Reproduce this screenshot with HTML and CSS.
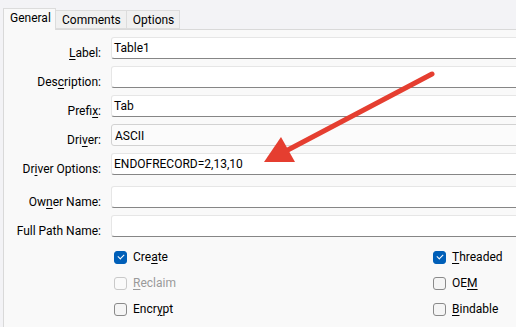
FILE: index.html
```html
<!DOCTYPE html>
<html>
	<head>
		<title>Table properties</title>
		<link rel="stylesheet" href="styles.css">
	</head>
	<body>
		<div class="window">
			<div class="tabs">
				<div class="tab active">General</div>
				<div class="tab">Comments</div>
				<div class="tab">Options</div>
			</div>
			<div class="panel">
				<div class="form">
					<div class="label"><u>L</u>abel:</div>
					<div class="field">Table1</div>
					<div class="label">Des<u>c</u>ription:</div>
					<div class="field"></div>
					<div class="label">Prefi<u>x</u>:</div>
					<div class="field">Tab</div>
					<div class="label">Dri<u>v</u>er:</div>
					<div class="field combo">ASCII</div>
					<div class="label">Dr<u>i</u>ver Options:</div>
					<div class="field">ENDOFRECORD=2,13,10</div>
					<div class="label spaced">Ow<u>n</u>er Name:</div>
					<div class="field spaced"></div>
					<div class="label">Full Path Name:</div>
					<div class="field"></div>
				</div>
				<div class="checks">
					<div class="check"><span class="box on"></span><span>Cre<u>a</u>te</span></div>
					<div class="check"><span class="box on"></span><span><u>T</u>hreaded</span></div>
					<div class="check disabled"><span class="box"></span><span><u>R</u>eclaim</span></div>
					<div class="check"><span class="box"></span><span>OE<u>M</u></span></div>
					<div class="check"><span class="box"></span><span>Encr<u>y</u>pt</span></div>
					<div class="check"><span class="box"></span><span><u>B</u>indable</span></div>
				</div>
			</div>
			<svg class="arrow" width="516" height="327" viewBox="0 0 516 327">
				<line x1="432" y1="74" x2="284" y2="152" stroke="#e53e30" stroke-width="5" stroke-linecap="round"/>
				<polygon points="264,162 281,137 295,162" fill="#e53e30"/>
			</svg>
		</div>
	</body>
</html>
```
FILE: styles.css
```css
html, body
{
	margin:0;
	padding:0;
}
body
{
	font-family:Roboto, "Noto Sans", sans-serif;
	font-size:12px;
	color:#000;
	background-color:#f3f3f6;
	overflow:hidden;
}
u
{
	text-decoration-thickness:1px;
	text-underline-offset:2px;
}
.window
{
	position:relative;
	width:516px;
	height:327px;
	overflow:hidden;
}
.tabs
{
	display:flex;
	align-items:flex-end;
	height:30px;
	padding-left:3px;
	box-sizing:border-box;
}
.tab
{
	height:19px;
	line-height:18px;
	padding:0 5px 0 6px;
	box-sizing:border-box;
	background-color:#f0f0f0;
	border:1px solid #dcdcdc;
	border-left:0px;
	margin-bottom:1px;
}
.tab.active
{
	height:22px;
	line-height:19px;
	background-color:#f9f9f9;
	border-left:1px solid #d9d9d9;
	border-bottom:0px;
	margin-bottom:0px;
	position:relative;
	z-index:1;
	width:53px;
}
.panel
{
	margin-top:-1px;
	margin-left:3px;
	height:300px;
	background-color:#f9f9f9;
	border-top:1px solid #d9d9d9;
	border-left:1px solid #d9d9d9;
}
.form
{
	display:grid;
	grid-template-columns:97px 420px;
	column-gap:10px;
	row-gap:7px;
	padding-top:7px;
}
.label
{
	text-align:right;
	padding-top:8px;
	height:22px;
	box-sizing:border-box;
	line-height:17px;
}
.field
{
	height:22px;
	box-sizing:border-box;
	background-color:#fff;
	border:1px solid #e6e6e6;
	border-bottom:1px solid #868686;
	border-radius:3px 0 0 3px;
	padding:2px 2px 0 2px;
	line-height:16px;
}
.field.combo
{
	background-color:#fbfbfb;
	border:1px solid #d2d2d2;
	padding-top:3px;
	padding-left:3px;
}
.spaced
{
	margin-top:4px;
}
.checks
{
	display:grid;
	grid-template-columns:319px 100px;
	grid-auto-rows:26px;
	padding-left:110px;
	padding-top:7px;
}
.check
{
	display:flex;
	align-items:center;
	gap:6px;
}
.check.disabled
{
	color:#9a9a9a;
}
.box
{
	width:13px;
	height:13px;
	box-sizing:border-box;
	border:1px solid #8a8a8a;
	border-radius:3px;
	background-color:#f5f5f5;
	position:relative;
}
.disabled .box
{
	border-color:#c9c9c9;
	background-color:#fafafa;
}
.box.on
{
	border-color:#005fb8;
	background-color:#005fb8;
}
.box.on:after
{
	content:"";
	position:absolute;
	left:3px;
	top:2px;
	width:5px;
	height:3px;
	border-left:1px solid #fff;
	border-bottom:1px solid #fff;
	transform:rotate(-45deg);
}
.arrow
{
	position:absolute;
	left:0;
	top:0;
	pointer-events:none;
}
```
